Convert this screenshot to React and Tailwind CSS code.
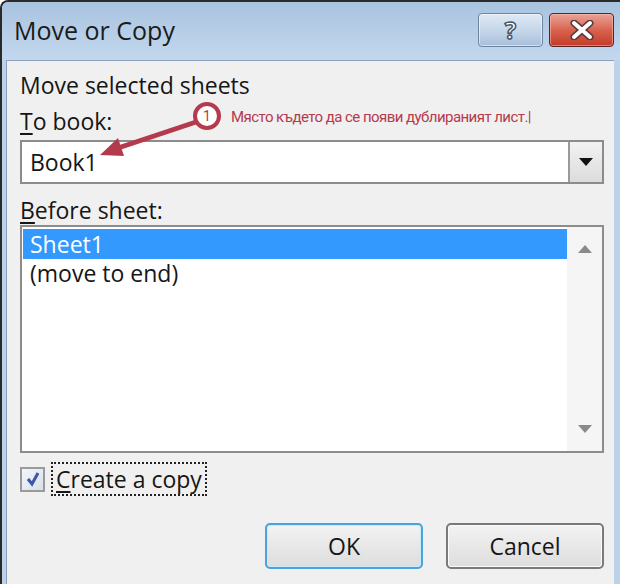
import React from "react";

const font = { fontFamily: '"Open Sans", "Noto Sans", sans-serif' };

const TitleButtons = () => (
  <div className="flex gap-[6px] mt-[11px]">
    {/* help button */}
    <div className="relative w-[65px] h-[34px] rounded-[4px] border border-[#6f84a0] bg-gradient-to-b from-[#dfe9f5] via-[#c6d7ea] to-[#a7bfdb] flex items-center justify-center shadow-[inset_0_0_0_1px_rgba(255,255,255,0.5)]">
      <span
        className="text-[24px] font-bold text-white leading-none"
        style={{ ...font, WebkitTextStroke: "1.5px #4a5566" }}
      >
        ?
      </span>
    </div>
    {/* close button */}
    <div className="w-[65px] h-[34px] rounded-[4px] border border-[#5b2226] bg-gradient-to-b from-[#e8a296] via-[#d8634f] to-[#c23a27] flex items-center justify-center shadow-[inset_0_0_0_1px_rgba(255,200,190,0.5)]">
      <svg width="26" height="20" viewBox="0 0 26 20">
        <path
          d="M5 3 L21 17 M21 3 L5 17"
          stroke="#5a3a3a"
          strokeWidth="7"
          strokeLinecap="round"
        />
        <path
          d="M5 3 L21 17 M21 3 L5 17"
          stroke="#ffffff"
          strokeWidth="4"
          strokeLinecap="round"
        />
      </svg>
    </div>
  </div>
);

const Annotation = () => (
  <div className="absolute left-[90px] top-[96px]">
    <svg width="140" height="64" viewBox="0 0 140 64" className="absolute left-0 top-0">
      <line x1="104" y1="24" x2="20" y2="52" stroke="#b43a4d" strokeWidth="5" />
      <polygon points="8,57 26,40 32,58" fill="#b43a4d" />
      <circle cx="115" cy="18" r="12" fill="#ffffff" stroke="#b43a4d" strokeWidth="4" />
      <text x="115" y="23" textAnchor="middle" fontSize="14" fill="#b43a4d" fontFamily="Roboto, sans-serif">
        1
      </text>
    </svg>
    <span
      className="absolute left-[139px] top-[8px] whitespace-nowrap text-[15px] text-[#b43a4d]"
      style={{ fontFamily: "Roboto, sans-serif", letterSpacing: "-0.55px" }}
    >
      Място където да се появи дублираният лист.|
    </span>
  </div>
);

export default function App() {
  return (
    <div
      className="relative w-[620px] h-[584px] bg-[#bcd2ea] border-t-2 border-l-2 border-[#2a2a2a] rounded-tl-[8px] overflow-hidden flex flex-col"
      style={font}
    >
      {/* title bar */}
      <div className="h-[58px] flex justify-between pl-[12px] pr-[6px] bg-gradient-to-b from-[#a9c3df] to-[#c3d8ee]">
        <div className="text-[25px] text-[#1b1b1b] pt-[12px] leading-[32px]">Move or Copy</div>
        <TitleButtons />
      </div>

      {/* content */}
      <div className="flex-1 ml-[4px] mr-[6px] bg-[#f0f0f0] border-t border-l border-[#8aa0bb] pl-[13px] pr-[10px] pt-[10px] text-[23px] text-[#161616]">
        <div className="leading-[28px]">Move selected sheets</div>
        <div className="leading-[28px] mt-[8px]">
          <span className="underline underline-offset-[3px]">T</span>o book:
        </div>
        <div className="mt-[5px] h-[44px] border-2 border-[#8c8c8c] bg-white flex">
          <div className="flex-1 pl-[8px] flex items-center">Book1</div>
          <div className="w-[34px] border-l-2 border-[#9a9a9a] bg-gradient-to-b from-[#f2f2f2] to-[#dcdcdc] flex items-center justify-center">
            <svg width="14" height="9" viewBox="0 0 14 9">
              <polygon points="0,0 14,0 7,8" fill="#111" />
            </svg>
          </div>
        </div>
        <div className="leading-[28px] mt-[12px]">
          <span className="underline underline-offset-[3px]">B</span>efore sheet:
        </div>
        <div className="mt-[1px] h-[228px] border-2 border-[#8c8c8c] bg-white flex">
          <div className="flex-1 pt-[2px] pl-[1px]">
            <div className="h-[30px] bg-[#3399ff] text-white pl-[7px] leading-[30px]">Sheet1</div>
            <div className="h-[29px] pl-[7px] leading-[29px]">(move to end)</div>
          </div>
          <div className="w-[35px] bg-[#f5f5f5] flex flex-col items-center justify-between py-[18px]">
            <svg width="14" height="8" viewBox="0 0 14 8">
              <polygon points="0,8 14,8 7,0" fill="#8a8a8a" />
            </svg>
            <svg width="14" height="8" viewBox="0 0 14 8">
              <polygon points="0,0 14,0 7,8" fill="#8a8a8a" />
            </svg>
          </div>
        </div>
        <div className="mt-[9px] flex items-center">
          <div className="w-[25px] h-[25px] border-2 border-[#9a9a9a] bg-gradient-to-br from-[#f4f6fa] to-[#d9dfe9] flex items-center justify-center">
            <svg width="16" height="16" viewBox="0 0 16 16">
              <path d="M3 8 L7 13 L13 2" stroke="#3e55a8" strokeWidth="3" fill="none" />
            </svg>
          </div>
          <div className="ml-[6px] border-2 border-dotted border-[#222] px-[3px] leading-[30px]">
            <span className="underline underline-offset-[3px]">C</span>reate a copy
          </div>
        </div>
        <div className="mt-[27px] flex justify-end gap-[23px]">
          <button className="w-[158px] h-[46px] rounded-[5px] border-2 border-[#49a3dc] bg-gradient-to-b from-[#f3f3f3] to-[#dddddd] shadow-[inset_0_0_0_1px_#cde8f8]">
            OK
          </button>
          <button className="w-[158px] h-[46px] rounded-[5px] border-2 border-[#7a7a7a] bg-gradient-to-b from-[#f3f3f3] to-[#dddddd] shadow-[inset_0_0_0_1px_#fbfbfb]">
            Cancel
          </button>
        </div>
      </div>

      <Annotation />
    </div>
  );
}
